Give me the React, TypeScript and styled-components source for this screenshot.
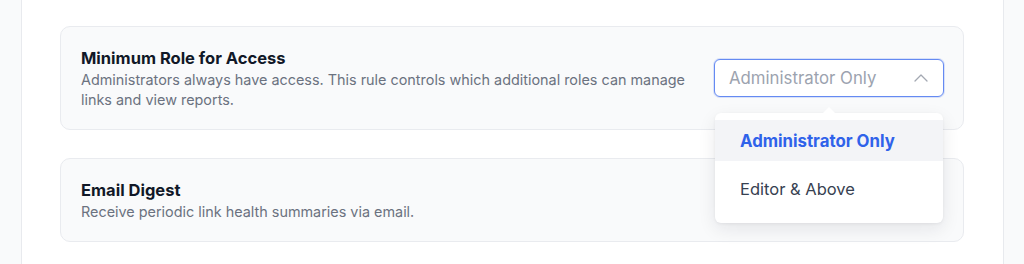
import React from "react";
import styled, { createGlobalStyle } from "styled-components";

const GlobalStyle = createGlobalStyle`
  html, body {
    margin: 0;
    padding: 0;
    background: #f9fafb;
    font-family: Inter, "Noto Sans", sans-serif;
    -webkit-font-smoothing: antialiased;
  }
  * { box-sizing: border-box; }
`;

const Page = styled.div`
  height: 264px;
  padding: 0 20px 0 21px;
  overflow: hidden;
`;

const Panel = styled.main`
  height: 100%;
  background: #ffffff;
  border-left: 1px solid #e8eaee;
  border-right: 1px solid #e8eaee;
  padding: 26px 39px 0 38px;
  display: flex;
  flex-direction: column;
  gap: 28px;
`;

const Card = styled.section`
  display: flex;
  align-items: center;
  justify-content: space-between;
  gap: 24px;
  padding: 19px 19px 19px 20px;
  background: #f9fafb;
  border: 1px solid #e9ebef;
  border-radius: 10px;
`;

const TextBlock = styled.div`
  display: flex;
  flex-direction: column;
  max-width: 630px;
`;

const Title = styled.h3`
  margin: 0;
  font-size: 16.5px;
  line-height: 24px;
  font-weight: 700;
  color: #111827;
`;

const Description = styled.p`
  margin: 0;
  font-size: 14.4px;
  line-height: 20px;
  color: #6b7280;
`;

const SelectWrap = styled.div`
  position: relative;
  width: 230px;
  flex-shrink: 0;
`;

const SelectButton = styled.button`
  width: 100%;
  height: 38px;
  display: flex;
  align-items: center;
  justify-content: space-between;
  padding: 0 15px 0 14px;
  background: #ffffff;
  border: 1px solid #658af2;
  border-radius: 6px;
  box-shadow: 0 0 0 1px rgba(101, 138, 242, 0.22);
  font-family: inherit;
  font-size: 16.8px;
  color: #9ca3af;
  cursor: pointer;
`;

const Menu = styled.ul`
  position: absolute;
  top: calc(100% + 16px);
  left: 1px;
  right: 1px;
  margin: 0;
  padding: 7px 0 14px;
  list-style: none;
  background: #ffffff;
  border-radius: 6px;
  box-shadow: 0 6px 18px rgba(17, 24, 39, 0.09), 0 1px 3px rgba(17, 24, 39, 0.06);
  z-index: 10;

  &::before {
    content: "";
    position: absolute;
    top: -6px;
    left: 50%;
    margin-left: -7px;
    border-left: 7px solid transparent;
    border-right: 7px solid transparent;
    border-bottom: 7px solid #ffffff;
  }
`;

const MenuItem = styled.li<{ $active?: boolean }>`
  height: 41px;
  display: flex;
  align-items: center;
  padding: 0 25px;
  font-size: ${(p) => (p.$active ? "16.8px" : "16.5px")};
  font-weight: ${(p) => (p.$active ? 700 : 400)};
  color: ${(p) => (p.$active ? "#2f62ea" : "#374151")};
  background: ${(p) => (p.$active ? "#f3f4f7" : "transparent")};
  & + & {
    margin-top: 7px;
  }
`;

const ChevronUp = () => (
  <svg width="14" height="8" viewBox="0 0 14 8" fill="none">
    <path d="M1 7 L7 1 L13 7" stroke="#a3a8b2" strokeWidth="1.3" strokeLinecap="round" strokeLinejoin="round" />
  </svg>
);

export default function App() {
  return (
    <>
      <GlobalStyle />
      <Page>
        <Panel>
          <Card>
            <TextBlock>
              <Title>Minimum Role for Access</Title>
              <Description>
                Administrators always have access. This rule controls which additional roles can manage links and view reports.
              </Description>
            </TextBlock>
            <SelectWrap>
              <SelectButton type="button">
                <span>Administrator Only</span>
                <ChevronUp />
              </SelectButton>
              <Menu>
                <MenuItem $active>Administrator Only</MenuItem>
                <MenuItem>Editor &amp; Above</MenuItem>
              </Menu>
            </SelectWrap>
          </Card>
          <Card>
            <TextBlock>
              <Title>Email Digest</Title>
              <Description>Receive periodic link health summaries via email.</Description>
            </TextBlock>
          </Card>
        </Panel>
      </Page>
    </>
  );
}
